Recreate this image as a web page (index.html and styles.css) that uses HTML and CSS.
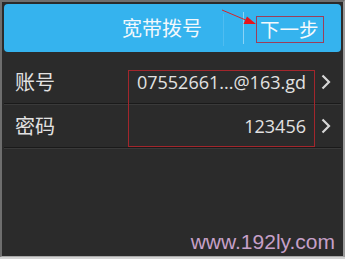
FILE: index.html
```html
<!DOCTYPE html>
<html>
<head>
<meta charset="utf-8">
<link rel="stylesheet" href="styles.css">
</head>
<body>
<div class="screen">
  <div class="header">
    <div class="title">宽带拨号</div>
    <div class="sep faint"></div>
    <div class="sep bright"></div>
    <div class="next">下一步</div>
    <svg class="arrow" width="345" height="60" viewBox="0 0 345 60">
      <line x1="222" y1="10" x2="248" y2="21" stroke="#d8232a" stroke-width="1"/>
      <polygon points="256,24 243.5,24 247,16.5" fill="#e8141c"/>
    </svg>
  </div>
  <div class="list">
    <div class="row">
      <div class="label">账号</div>
      <div class="value">07552661...@163.gd</div>
      <svg class="chev" width="10" height="16" viewBox="0 0 10 16"><path d="M1.5 1.5 L8 8 L1.5 14.5" fill="none" stroke="#d6d6d6" stroke-width="2.2"/></svg>
    </div>
    <div class="row">
      <div class="label">密码</div>
      <div class="value">123456</div>
      <svg class="chev" width="10" height="16" viewBox="0 0 10 16"><path d="M1.5 1.5 L8 8 L1.5 14.5" fill="none" stroke="#d6d6d6" stroke-width="2.2"/></svg>
    </div>
    <div class="redbox"></div>
  </div>
  <div class="watermark">www.192ly.com</div>
</div>
</body>
</html>
```
FILE: styles.css
```css
html, body {
  margin: 0;
  padding: 0;
  background: #d4d4d4;
}
.screen {
  position: relative;
  box-sizing: border-box;
  width: 345px;
  height: 257px;
  background: #2b2b2b;
  border-left: 2px solid #6e6e6e;
  border-top: 2px solid #6e6e6e;
  border-right: 2px solid #9a9a9a;
  border-bottom: 1px solid #a8a8a8;
  padding: 2px 2px 0 2px;
  font-family: "Noto Sans CJK SC", "Open Sans", sans-serif;
}
.header {
  position: relative;
  height: 48px;
  background: #35b3ee;
  border-radius: 4px;
  display: flex;
  align-items: center;
}
.title {
  margin-left: 118px;
  font-size: 20px;
  color: #f2f8fc;
  line-height: 1;
}
.sep {
  width: 1px;
  align-self: flex-start;
}
.faint {
  margin-left: 21px;
  margin-top: 10px;
  height: 32px;
  background: #4fbcf0;
}
.bright {
  margin-left: 19px;
  margin-top: 8px;
  height: 32px;
  background: #8ad3f6;
}
.next {
  margin-left: 12px;
  margin-top: 3px;
  box-sizing: border-box;
  width: 68px;
  height: 27px;
  border: 1px solid #9c3e5a;
  color: #f4f9fc;
  font-size: 19.5px;
  line-height: 24px;
  padding-left: 3px;
}
.arrow {
  position: absolute;
  left: -4px;
  top: -4px;
  pointer-events: none;
}
.list {
  position: relative;
  margin-top: 9px;
}
.row {
  display: flex;
  align-items: center;
  height: 42px;
  border-bottom: 1px solid #1a1a1a;
  box-shadow: 0 1px 0 #3a3a3a;
  margin-bottom: 1px;
  padding-left: 11px;
  padding-right: 10px;
}
.label {
  font-size: 20px;
  color: #e2e2e2;
  line-height: 1;
}
.value {
  flex: 1;
  text-align: right;
  font-family: "Open Sans", sans-serif;
  font-size: 18px;
  color: #e2e2e2;
  margin-right: 15px;
}
.chev {
  display: block;
}
.redbox {
  position: absolute;
  left: 124px;
  top: 9px;
  width: 185px;
  height: 75px;
  border: 1px solid #a3262c;
}
.watermark {
  position: absolute;
  right: 8px;
  bottom: 2px;
  font-family: "Liberation Sans", Arial, sans-serif;
  font-size: 21px;
  color: #c6a0c8;
}
```
